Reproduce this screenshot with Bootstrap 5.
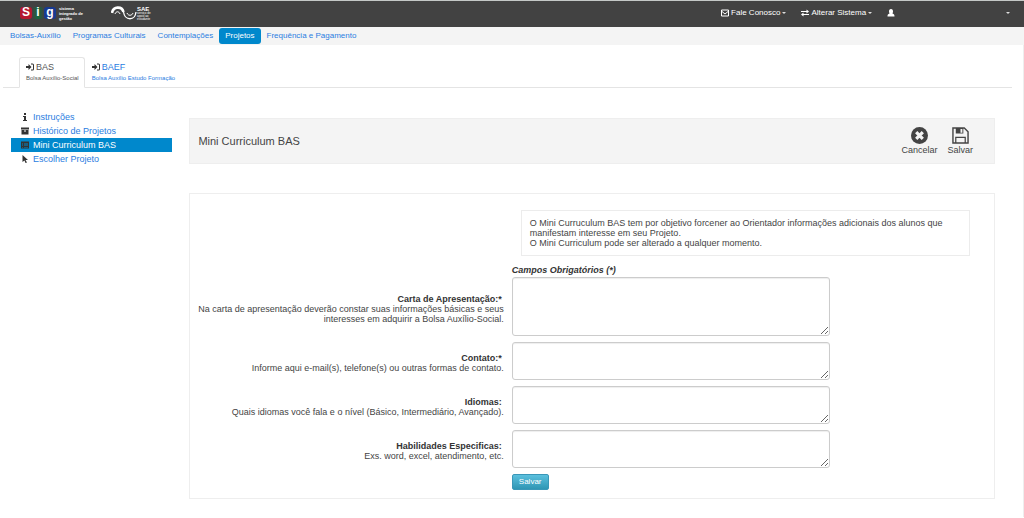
<!DOCTYPE html>
<html lang="pt-BR">
<head>
<meta charset="utf-8">
<meta name="viewport" content="width=device-width, initial-scale=1">
<title>Mini Curriculum BAS</title>
<link rel="stylesheet" href="https://cdn.jsdelivr.net/npm/bootstrap@5.3.0/dist/css/bootstrap.min.css">
<style>
  :root { --ink: #444; --link: #2a7de1; --accent: #0088cc; --soft: #f4f4f4; --line: #eee; }
  body { font: 9px/10px "Liberation Sans", Arial, sans-serif; color: var(--ink); background: #fff; }
  a { color: var(--link); text-decoration: none; }
  svg { display: block; fill: currentColor; flex: none; }
  .topbar { background: #424242; border-top: 1px solid #c4c8c6; height: 27px; padding: 0 14px 2px 20px; font-size: 8px; color: #fff; }
  .topbar a { color: #fff; }
  .top-links { gap: 15px; }
  .top-links a { gap: 2px; }
  .account { width: 12vw; }
  .menu-caret::after { content: ""; border: 2px solid transparent; border-top-color: #ddd; border-bottom: 0; }
  .sig-tile { width: 12px; height: 12px; font-weight: bold; font-size: 12px; line-height: 11px; text-align: center; border-radius: 3px; }
  .sig-r { background: #b5172f; } .sig-g { background: linear-gradient(90deg, #424242, #146b3c 50%, #424242); } .sig-b { background: #183a91; }
  .tagline { font-size: 4px; line-height: 5px; font-weight: bold; margin-left: 3px; }
  .sae-name { font-size: 6px; line-height: 6px; font-weight: bold; }
  .sae-text { font-size: 3px; line-height: 3px; }
  .mainnav { background: var(--soft); height: 18px; padding: 0 4px; font-size: 8px; }
  .mainnav .nav-link { padding: 0 6px; line-height: 16px; color: var(--link); border-radius: 3px; }
  .mainnav .nav-link.active { background: var(--accent); color: #fff; }
  .page-body { border-right: 1px solid var(--line); }
  .subtabs { margin: 12px 11px 0 3px; padding-left: 16px; border-bottom: 1px solid #e4e4e4; }
  .subtabs .nav-link { padding: 4px 5px 5px 6px; border-radius: 3px 3px 0 0; color: var(--link); }
  .subtabs .nav-link.active { border-color: #e4e4e4 #e4e4e4 #fff; color: #555; }
  .subtabs .nav-link span { gap: 2px; }
  .subtabs svg { color: #333; }
  .subtabs small { display: block; font-size: 6px; line-height: 8px; margin-top: 2px; }
  .workspace { padding: 30px 28px 18px 11px; gap: 17px; }
  .sidebar { flex: 0 0 16.4%; margin-top: -8px; }
  .sidebar a { padding: 0 10px; gap: 4px; line-height: 14px; }
  .sidebar svg { color: #333; }
  .sidebar a.active { background: var(--accent); color: #fff; }
  .title-box { background: var(--soft); border: 1px solid var(--line); padding: 8px 21px 8px 8px; margin-bottom: 29px; }
  .title-box h1 { font-size: 11px; line-height: 14px; }
  .tools { gap: 10px; }
  .tool { border: 0; background: none; padding: 0; color: var(--ink); line-height: 10px; }
  .tool svg { margin: 0 auto 1px; }
  .form-box { border: 1px solid var(--line); padding: 16px 0 8px; }
  .label-cell { flex: 0 0 40%; padding-right: 8px; text-align: right; }
  .label-cell label { color: #333; font-weight: bold; padding-right: 2px; }
  .field-cell { flex: 1; }
  .info { border: 1px solid #ececec; padding: 7px 8px; margin: 0 24px 9px 9px; }
  .required-note { color: #333; margin-bottom: 2px; }
  .field-row { margin-bottom: 6px; }
  .field-row .label-cell { padding-top: 4px; }
  .field-cell textarea { width: 66%; height: 38px; min-height: 0; padding: 3px; font-size: 9px; border: 1px solid #ccc; border-radius: 3px; box-shadow: inset 0 1px 1px #eee; }
  .field-cell textarea.tall { height: 59px; }
  .save { font-size: 8px; line-height: 12px; color: #fff; padding: 1px 6px; border: 1px solid #3a97b8; border-radius: 2px; background: linear-gradient(#5bc0de, #2f96b4); }
</style>
</head>
<body>
<header class="topbar d-flex align-items-center">
  <a href="#" class="d-flex align-items-center" aria-label="SIG">
    <span class="sig-tile sig-r">S</span><span class="sig-tile sig-g">i</span><span class="sig-tile sig-b">g</span>
    <span class="tagline">sistema<br>integrado de<br>gestão</span>
  </a>
  <a href="#" class="d-flex align-items-center ms-4" aria-label="SAE">
    <svg class="ms-1" width="26" height="15" viewBox="0 0 26 15"><g fill="none" stroke="#fff"><path d="M1 7C2 0 11 0 12.500 6" stroke-width="2.600"/><path d="M12.500 6C14 15 24 15 25 6" stroke-width="1.300"/><path d="M4 8C5 5 8 5 9 8M16 7c1 3 5 3 6 0" stroke-width="1"/></g></svg>
    <span><span class="sae-name d-block">SAE</span><span class="sae-text d-block">serviço de<br>apoio ao<br>estudante</span></span>
  </a>
  <nav class="top-links d-flex align-items-center ms-auto">
    <a href="#" class="d-flex align-items-center menu-caret"><svg width="8" height="8" viewBox="0 0 16 16"><path fill="none" stroke="currentColor" stroke-width="2" d="M1 2h14v12H1zM2 5l6 5 6-5"/></svg>Fale Conosco</a>
    <a href="#" class="d-flex align-items-center menu-caret"><svg width="8" height="8" viewBox="0 0 16 16"><path d="M0 4h11V1l5 4-5 4V6H0zM16 10H5V7l-5 4 5 4v-3h11z"/></svg>Alterar Sistema</a>
    <a href="#" class="account d-flex align-items-center justify-content-between menu-caret" aria-label="Conta"><svg width="8" height="8" viewBox="0 0 16 16"><path d="M8 0C5 0 4 2 4 5c0 2 1 3 1 4-3 1-4 2-4 6h14c0-4-1-5-4-6 0-1 1-2 1-4 0-3-1-5-4-5z"/></svg></a>
  </nav>
</header>
<nav class="mainnav nav align-items-center">
  <a class="nav-link" href="#">Bolsas-Auxílio</a>
  <a class="nav-link" href="#">Programas Culturais</a>
  <a class="nav-link" href="#">Contemplações</a>
  <a class="nav-link active" href="#">Projetos</a>
  <a class="nav-link" href="#">Frequência e Pagamento</a>
</nav>
<div class="page-body overflow-hidden">
  <nav class="subtabs nav nav-tabs">
    <a class="nav-link active" href="#"><span class="d-flex align-items-center"><svg width="8" height="8" viewBox="0 0 16 16"><path d="M0 6h5V2l6 6-6 6v-4H0zM10 1h3q3 0 3 3v8q0 3-3 3h-3v-2h3q1 0 1-1V4q0-1-1-1h-3z"/></svg>BAS</span><small>Bolsa Auxílio-Social</small></a>
    <a class="nav-link" href="#"><span class="d-flex align-items-center"><svg width="8" height="8" viewBox="0 0 16 16"><path d="M0 6h5V2l6 6-6 6v-4H0zM10 1h3q3 0 3 3v8q0 3-3 3h-3v-2h3q1 0 1-1V4q0-1-1-1h-3z"/></svg>BAEF</span><small>Bolsa Auxílio Estudo Formação</small></a>
  </nav>
  <div class="workspace d-flex align-items-start">
    <nav class="sidebar d-flex flex-column">
      <a class="d-flex align-items-center" href="#"><svg width="8" height="8" viewBox="0 0 16 16"><path d="M6 0h4v4H6zM4 6h6v8h2v2H4v-2h2V8H4z"/></svg>Instruções</a>
      <a class="d-flex align-items-center" href="#"><svg width="8" height="8" viewBox="0 0 16 16"><path d="M0 1h16v4H0zM1 6h14v9H1zm5 1v2h4V7z" fill-rule="evenodd"/></svg>Histórico de Projetos</a>
      <a class="d-flex align-items-center active" href="#"><svg width="8" height="8" viewBox="0 0 16 16"><path d="M0 1h16v14H0zm2 4v2h2V5zm4 0v2h8V5zM2 9v1h2V9zm4 0v1h8V9zm-4 3v1h2v-1zm4 0v1h8v-1z" fill-rule="evenodd"/></svg>Mini Curriculum BAS</a>
      <a class="d-flex align-items-center" href="#"><svg width="8" height="8" viewBox="0 0 16 16"><path d="M3 0l11 10H9l3 5-3 1-2-5-4 3z"/></svg>Escolher Projeto</a>
    </nav>
    <main class="flex-fill">
      <div class="title-box d-flex align-items-center justify-content-between">
        <h1 class="m-0 fw-normal">Mini Curriculum BAS</h1>
        <div class="tools d-flex">
          <button type="button" class="tool"><svg width="17" height="17" viewBox="0 0 18 18"><circle cx="9" cy="9" r="9"/><path d="M5.500 5.500l7 7M12.500 5.500l-7 7" stroke="#f4f4f4" stroke-width="3.400"/></svg>Cancelar</button>
          <button type="button" class="tool"><svg width="17" height="17" viewBox="0 0 18 18"><path d="M1 1h12l4 4v12H1z" fill="none" stroke="currentColor" stroke-width="1.500"/><path d="M4 1h8v6H4zm5 1v4h2V2z" fill-rule="evenodd"/><path d="M4 17v-6h10v6" fill="none" stroke="currentColor" stroke-width="1.300"/></svg>Salvar</button>
        </div>
      </div>
      <form class="form-box">
        <div class="d-flex">
          <div class="label-cell"></div>
          <div class="field-cell">
            <div class="info">O Mini Curruculum BAS tem por objetivo forcener ao Orientador informações adicionais dos alunos que manifestam interesse em seu Projeto.<br>O Mini Curriculum pode ser alterado a qualquer momento.</div>
            <div class="required-note fw-bold fst-italic">Campos Obrigatórios (*)</div>
          </div>
        </div>
        <div class="field-row d-flex align-items-center">
          <div class="label-cell"><label for="carta">Carta de Apresentação:*</label><div>Na carta de apresentação deverão constar suas informações básicas e seus interesses em adquirir a Bolsa Auxílio-Social.</div></div>
          <div class="field-cell d-flex"><textarea id="carta" class="form-control tall"></textarea></div>
        </div>
        <div class="field-row d-flex align-items-center">
          <div class="label-cell"><label for="contato">Contato:*</label><div>Informe aqui e-mail(s), telefone(s) ou outras formas de contato.</div></div>
          <div class="field-cell d-flex"><textarea id="contato" class="form-control"></textarea></div>
        </div>
        <div class="field-row d-flex align-items-center">
          <div class="label-cell"><label for="idiomas">Idiomas:</label><div>Quais idiomas você fala e o nível (Básico, Intermediário, Avançado).</div></div>
          <div class="field-cell d-flex"><textarea id="idiomas" class="form-control"></textarea></div>
        </div>
        <div class="field-row d-flex align-items-center">
          <div class="label-cell"><label for="habilidades">Habilidades Especificas:</label><div>Exs. word, excel, atendimento, etc.</div></div>
          <div class="field-cell d-flex"><textarea id="habilidades" class="form-control"></textarea></div>
        </div>
        <div class="d-flex">
          <div class="label-cell"></div>
          <div class="field-cell"><button type="submit" class="save">Salvar</button></div>
        </div>
      </form>
    </main>
  </div>
</div>
<script src="https://cdn.jsdelivr.net/npm/bootstrap@5.3.0/dist/js/bootstrap.bundle.min.js"></script>
</body>
</html>
